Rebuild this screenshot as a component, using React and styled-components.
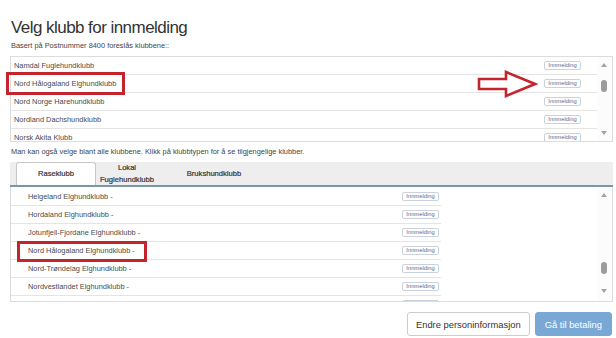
import React from "react";
import styled, { createGlobalStyle } from "styled-components";

const GlobalStyle = createGlobalStyle`
  html, body { margin: 0; padding: 0; background: #fff; }
  body { font-family: "Liberation Sans", Arial, sans-serif; color: #333; }
  * { box-sizing: border-box; }
`;

const Page = styled.div`
  position: relative;
  width: 616px;
  height: 338px;
  padding: 17px 3px 0 10px;
  overflow: hidden;
`;

const Title = styled.h1`
  margin: 0;
  padding-left: 1px;
  font-size: 17px;
  line-height: 22px;
  font-weight: normal;
  letter-spacing: -0.55px;
  color: #333;
`;

const Note = styled.p`
  margin: ${(p) => p.$mt || 0}px 0 ${(p) => p.$mb || 0}px;
  padding-left: ${(p) => p.$pl || 1}px;
  font-size: 7.4px;
  line-height: 12px;
  color: #444;
`;

const ListBox = styled.div`
  display: flex;
  height: ${(p) => p.$h}px;
  border: 1px solid #dcdcdc;
  border-top: ${(p) => (p.$noTop ? "none" : "1px solid #dcdcdc")};
  padding-top: ${(p) => (p.$noTop ? 1 : 0)}px;
  overflow: hidden;
`;

const Rows = styled.div`
  flex: ${(p) => (p.$w ? "0 0 auto" : "1")};
  width: ${(p) => (p.$w ? `${p.$w}px` : "auto")};
  overflow: hidden;
`;

const Spacer = styled.div`
  flex: 1;
`;

const Row = styled.div`
  display: flex;
  align-items: center;
  justify-content: space-between;
  height: 18px;
  flex-shrink: 0;
  padding: 0 ${(p) => p.$pr}px 0 ${(p) => p.$pl}px;
  border-bottom: 1px solid #e4e4e4;
  font-size: 7.4px;
  color: #4a4a4a;
  white-space: nowrap;
`;

const SmallButton = styled.button`
  width: 37px;
  height: 9px;
  padding: 0;
  border: 1px solid #c9d2de;
  border-radius: 2px;
  background: #fff;
  font-family: "Liberation Sans", Arial, sans-serif;
  font-size: 5.8px;
  line-height: 7px;
  color: #5a6a8a;
`;

const Scrollbar = styled.div`
  position: relative;
  width: 15px;
  flex: 0 0 15px;
  background: #fcfcfc;
`;

const Arrow = styled.div`
  position: absolute;
  left: 4px;
  ${(p) => (p.$dir === "up" ? "top" : "bottom")}: ${(p) => p.$off}px;
  width: 0;
  height: 0;
  border-left: 3px solid transparent;
  border-right: 3px solid transparent;
  ${(p) =>
    p.$dir === "up"
      ? "border-bottom: 4px solid #a3a3a3;"
      : "border-top: 4px solid #a3a3a3;"}
`;

const Thumb = styled.div`
  position: absolute;
  left: 4px;
  width: 6px;
  height: 12px;
  border-radius: 3px;
  background: #9c9c9c;
`;

const TabBar = styled.div`
  display: flex;
  align-items: stretch;
  height: 25px;
  margin-top: 4px;
  padding-left: 6px;
  background: #eeeeee;
  border-bottom: 2px solid #7d96a6;
`;

const Tab = styled.div`
  display: flex;
  align-items: center;
  justify-content: center;
  width: ${(p) => p.$w}px;
  text-align: center;
  font-size: 7.6px;
  line-height: 12px;
  font-weight: normal;
  -webkit-text-stroke: 0.2px #333;
  color: #333;
  background: ${(p) => (p.$active ? "#fff" : "transparent")};
  border: ${(p) => (p.$active ? "1px solid #c8c8c8" : "none")};
  border-bottom: none;
  border-radius: 3px 3px 0 0;
`;

const Footer = styled.div`
  display: flex;
  justify-content: flex-end;
  gap: 5px;
  margin-top: 10px;
  padding-right: 1px;
`;

const Button = styled.button`
  height: 24px;
  padding: 0 ${(p) => p.$px}px;
  border-radius: 3px;
  font-family: "Liberation Sans", Arial, sans-serif;
  font-size: 9.4px;
  border: 1px solid ${(p) => (p.$primary ? "#7aa8d4" : "#cccccc")};
  background: ${(p) => (p.$primary ? "#7aa8d4" : "#fff")};
  color: ${(p) => (p.$primary ? "#fff" : "#333")};
`;

const Highlight = styled.div`
  position: absolute;
  left: ${(p) => p.$x}px;
  top: ${(p) => p.$y}px;
  width: ${(p) => p.$w}px;
  height: ${(p) => p.$h}px;
  border: 3px solid #c4242c;
`;

const ArrowMark = styled.svg`
  position: absolute;
  left: 476px;
  top: 70px;
`;

const suggested = [
  "Namdal Fuglehundklubb",
  "Nord Hålogaland Elghundklubb",
  "Nord Norge Harehundklubb",
  "Nordland Dachshundklubb",
  "Norsk Akita Klubb",
];

const breedClubs = [
  "Helgeland Elghundklubb -",
  "Hordaland Elghundklubb -",
  "Jotunfjell-Fjordane Elghundklubb -",
  "Nord Hålogaland Elghundklubb -",
  "Nord-Trøndelag Elghundklubb -",
  "Nordvestlandet Elghundklubb -",
  "Rogaland Elghundklubb -",
];

function FakeScroll({ thumbTop, upOff, downOff }) {
  return (
    <Scrollbar>
      <Arrow $dir="up" $off={upOff} />
      <Thumb style={{ top: thumbTop }} />
      <Arrow $dir="down" $off={downOff} />
    </Scrollbar>
  );
}

export default function App() {
  return (
    <>
      <GlobalStyle />
      <Page>
        <Title>Velg klubb for innmelding</Title>
        <Note $mt={1} $mb={4}>Basert på Postnummer 8400 foreslås klubbene::</Note>
        <ListBox $h={86}>
          <Rows>
            {suggested.map((name) => (
              <Row key={name} $pl={3} $pr={16}>
                <span>{name}</span>
                <SmallButton>Innmelding</SmallButton>
              </Row>
            ))}
          </Rows>
          <FakeScroll thumbTop={23} upOff={6} downOff={6} />
        </ListBox>
        <Note $mt={4} $pl={1}>
          Man kan også velge blant alle klubbene. Klikk på klubbtypen for å se tilgjengelige klubber.
        </Note>
        <TabBar>
          <Tab $active $w={80}>Raseklubb</Tab>
          <Tab $w={62}>
            Lokal
            <br />
            Fuglehundklubb
          </Tab>
          <Tab $w={112}>Brukshundklubb</Tab>
        </TabBar>
        <ListBox $h={115} $noTop>
          <Rows $w={430}>
            {breedClubs.map((name) => (
              <Row key={name} $pl={17} $pr={2}>
                <span>{name}</span>
                <SmallButton>Innmelding</SmallButton>
              </Row>
            ))}
          </Rows>
          <Spacer />
          <FakeScroll thumbTop={74} upOff={5} downOff={8} />
        </ListBox>
        <Footer>
          <Button $px={8}>Endre personinformasjon</Button>
          <Button $primary $px={9}>Gå til betaling</Button>
        </Footer>

        <Highlight $x={6} $y={72} $w={119} $h={23} />
        <Highlight $x={17} $y={241} $w={130} $h={21} />
        <ArrowMark width="62" height="28" viewBox="0 0 62 28">
          <polygon
            points="3,9 30,9 30,2 59,14 30,26 30,19 3,19"
            fill="#fff"
            stroke="#c4242c"
            strokeWidth="2.6"
            strokeLinejoin="miter"
          />
        </ArrowMark>
      </Page>
    </>
  );
}
